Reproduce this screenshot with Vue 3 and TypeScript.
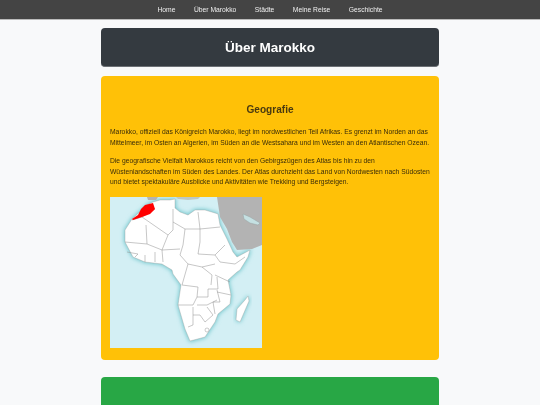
<template>
  <nav class="topnav">
    <a v-for="item in navItems" :key="item" href="#">{{ item }}</a>
  </nav>
  <main class="page">
    <header class="title-card">
      <h1>Über Marokko</h1>
    </header>
    <section class="card yellow">
      <h2>Geografie</h2>
      <p>Marokko, offiziell das Königreich Marokko, liegt im nordwestlichen Teil Afrikas. Es grenzt im Norden an das Mittelmeer, im Osten an Algerien, im Süden an die Westsahara und im Westen an den Atlantischen Ozean.</p>
      <p>Die geografische Vielfalt Marokkos reicht von den Gebirgszügen des Atlas bis hin zu den Wüstenlandschaften im Süden des Landes. Der Atlas durchzieht das Land von Nordwesten nach Südosten und bietet spektakuläre Ausblicke und Aktivitäten wie Trekking und Bergsteigen.</p>
      <svg class="map" viewBox="0 0 152 151" role="img" aria-label="Karte von Afrika mit Marokko in Rot">
        <defs>
          <filter id="glow" x="-20%" y="-20%" width="140%" height="140%">
            <feGaussianBlur stdDeviation="2" />
          </filter>
          <clipPath id="frame"><rect width="152" height="151" /></clipPath>
        </defs>
        <g clip-path="url(#frame)">
          <rect width="152" height="151" fill="#d3eff4" />
          <path :d="africa" fill="#6cc5cb" stroke="#6cc5cb" stroke-width="1.5" filter="url(#glow)" />
          <path :d="madagascar" fill="#6cc5cb" stroke="#6cc5cb" stroke-width="1" filter="url(#glow)" />
          <path d="M107 0L152 0L152 48L142 52L127 53L122 45L117 32L110 20Z" fill="#b3b3b3" />
          <path d="M37 0L48 0L46 3L38 3Z" fill="#b3b3b3" />
          <path d="M66 0L90 0L88 2L78 3L68 2Z" fill="#bcc8c6" />
          <path d="M133 17L140 20L150 26L148 28L140 26L134 22Z" fill="#c5e0e2" stroke="#8f9c9c" stroke-width=".4" />
          <path :d="africa" fill="#fff" stroke="#a5a5a5" stroke-width=".4" />
          <path :d="madagascar" fill="#fff" stroke="#a5a5a5" stroke-width=".4" />
          <path v-for="(line, i) in borders" :key="i" :d="line" fill="none" stroke="#8f8f8f" stroke-width=".5" />
          <circle cx="97" cy="133" r="2" fill="#fff" stroke="#999" stroke-width=".5" />
          <path d="M35 8L43 6L45 12L40 17L32 20L23 23L22 22L28 18L31 12Z" fill="#f00" />
        </g>
      </svg>
    </section>
    <section class="card green"></section>
  </main>
</template>

<script setup lang="ts">
const navItems = ['Home', 'Über Marokko', 'Städte', 'Meine Reise', 'Geschichte']

// traced by eye, local map coordinates
const africa =
  'M43 5L50 3L60 3L65 2L65 11L70 15L78 18L85 13L95 13L105 16L108 17L110 28L117 42L123 55L127 60L140 53L138 60L130 73L127 75L118 83L121 98L120 107L108 117L105 125L95 140L80 144L75 132L68 108L71 88L63 77L62 73L52 67L35 65L23 60L15 45L15 33L22 22L32 13L37 8Z'
const madagascar = 'M138 99L139 104L133 118L130 125L126 123L127 112L135 103Z'
const borders = [
  'M45 12L32 20L22 23',
  'M36 28L37 47',
  'M32 20L58 38L63 33L63 12',
  'M63 25L75 32L90 32L110 30',
  'M88 15L90 32L90 45L88 57L105 58L115 48',
  'M75 32L73 48L70 58L78 67L92 70L105 67',
  'M15 45L37 47L52 53L58 38',
  'M52 53L53 65M52 53L70 52',
  'M105 58L110 65L125 67L135 60',
  'M17 55L28 57L25 60M35 58L35 65M45 55L45 65',
  'M78 67L72 88L88 90L87 100L98 100L98 92L108 92L107 80',
  'M92 70L102 78L101 88',
  'M105 78L120 85M107 95L121 98',
  'M68 108L83 108L87 100M87 108L97 108L107 103',
  'M107 93L110 105L103 105L105 117',
  'M83 110L83 128L78 130M83 118L90 118L95 125L103 118L97 110',
]
</script>

<style>
body {
  background: #f8f9fa;
  overflow: hidden;
}
</style>

<style scoped>
.topnav {
  display: flex;
  justify-content: center;
  gap: 18.5px;
  height: 19px;
  align-items: center;
  background: #444;
  border-bottom: 1px solid #bbb;
  font-family: 'Liberation Sans', Arial, sans-serif;
  font-size: 6.75px;
}

.topnav a {
  color: #eee;
  text-decoration: none;
  filter: blur(0.25px);
}

.page {
  width: 338px;
  margin: 0 auto;
  padding-top: 8px;
  font-family: 'Liberation Sans', Arial, sans-serif;
}

.title-card {
  height: 39px;
  display: flex;
  align-items: center;
  justify-content: center;
  box-sizing: border-box;
  background: #343a40;
  border-radius: 4px;
  border-bottom: 1px solid #6c7075;
}

h1 {
  margin: 0;
  color: #fff;
  font-size: 13.5px;
  font-weight: 700;
  filter: blur(0.2px);
}

.card {
  border-radius: 4px;
  box-sizing: border-box;
}

.yellow {
  margin-top: 9px;
  height: 284px;
  padding: 28px 9px 0;
  background: #ffc107;
  color: #3a2d0a;
}

h2 {
  margin: 0 0 11px;
  text-align: center;
  font-size: 10.1px;
  line-height: 12px;
  color: #4a3a10;
  filter: blur(0.2px);
}

p {
  margin: 0 0 7.2px;
  font-size: 6.75px;
  line-height: 10.8px;
  filter: blur(0.3px);
}

.map {
  display: block;
  width: 152px;
  height: 151px;
  margin-top: 9.2px;
  filter: blur(0.35px);
}

.green {
  margin-top: 17px;
  height: 120px;
  background: #28a745;
}
</style>
